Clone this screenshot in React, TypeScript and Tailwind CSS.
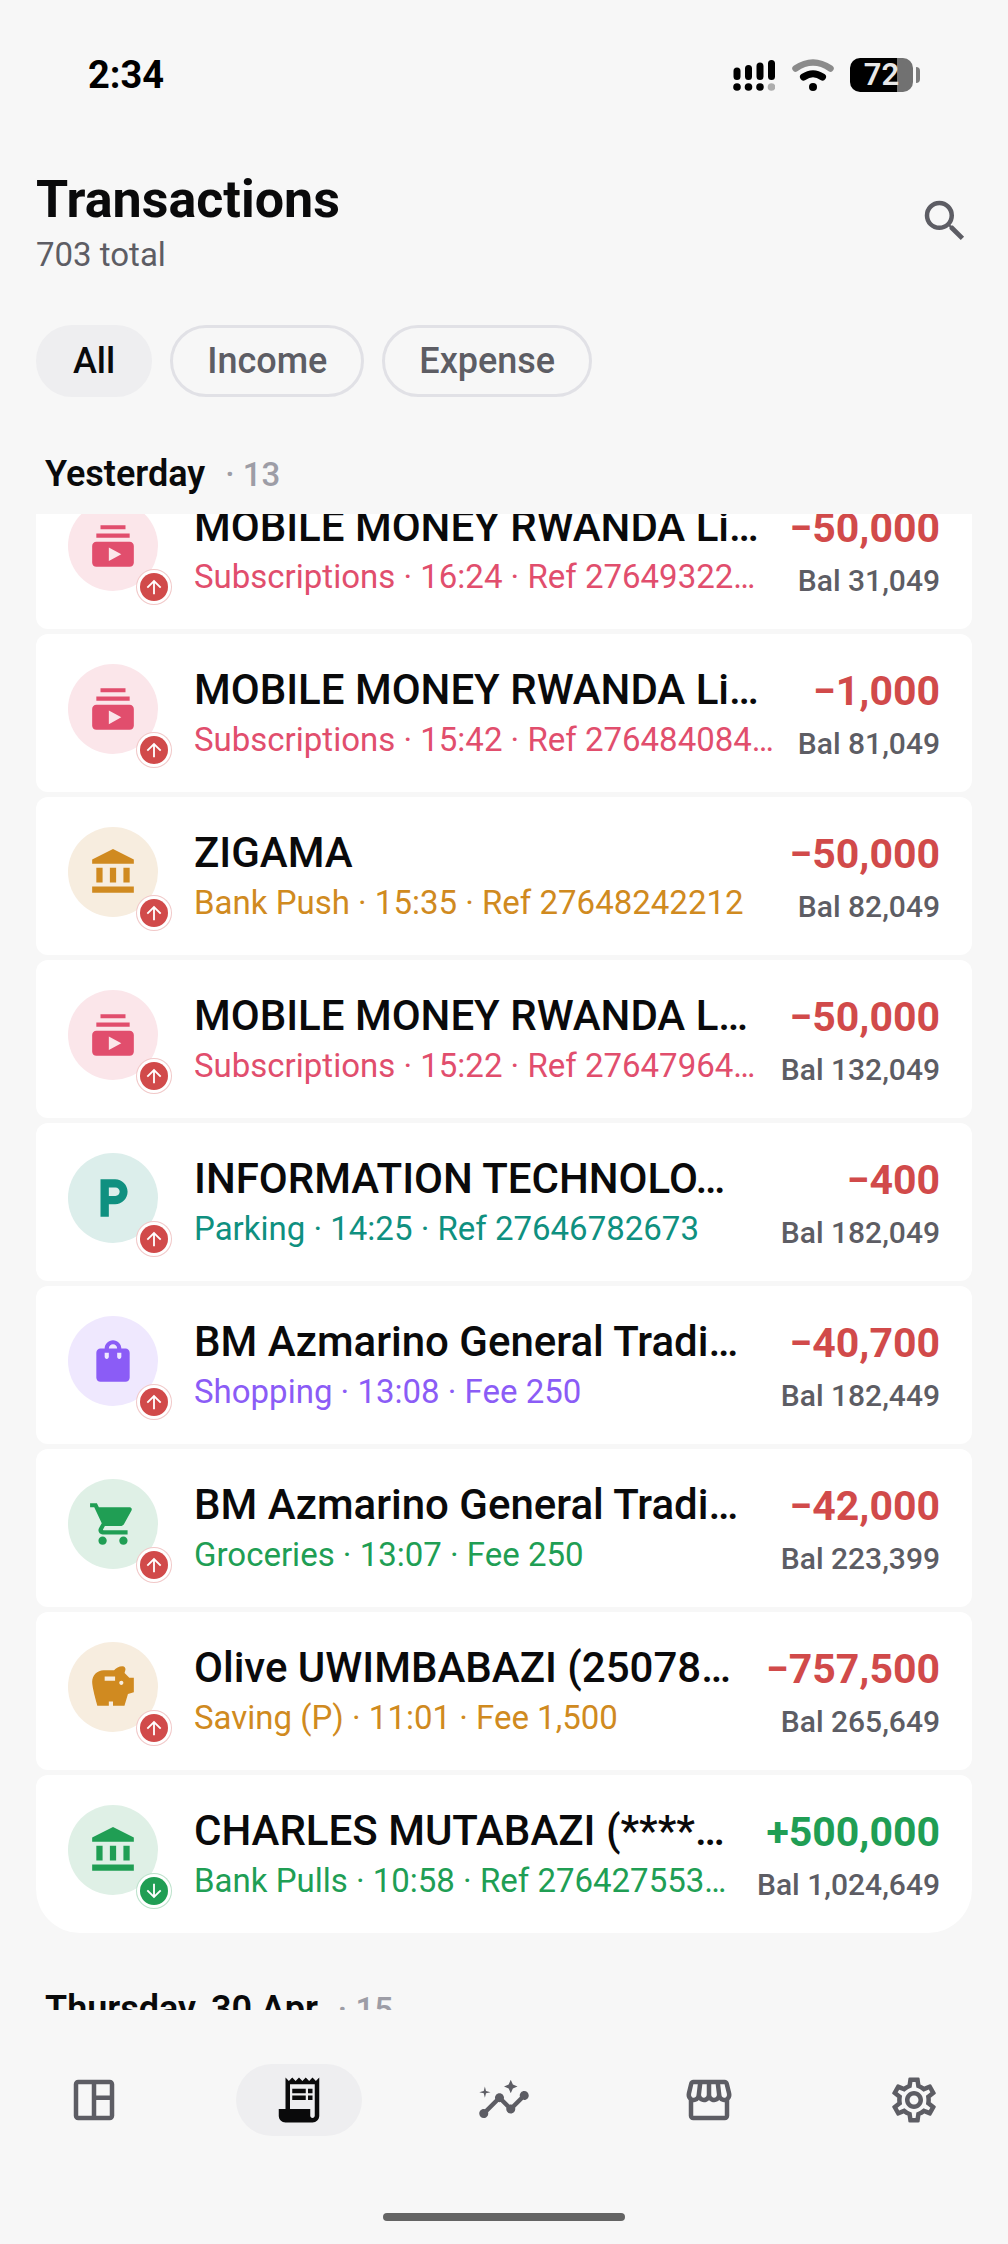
import React from 'react';
import clsx from 'clsx';
import {
  MdArrowDownward,
  MdArrowUpward,
  MdInsights,
  MdLocalParking,
  MdOutlineSettings,
  MdOutlineSpaceDashboard,
  MdOutlineStorefront,
  MdReceiptLong,
  MdSavings,
  MdSearch,
  MdShoppingBag,
  MdShoppingCart,
  MdSubscriptions,
} from 'react-icons/md';

type IconType = React.ComponentType<{ className?: string }>;

function BankIcon({ className }: { className?: string }) {
  return (
    <svg viewBox="0 0 24 24" fill="currentColor" className={className}>
      <path d="M4 10h3v7H4zM10.5 10h3v7h-3zM17 10h3v7h-3zM2 19h20v3H2zM12 1 2 6v2h20V6z" />
    </svg>
  );
}

const tones = {
  pink: { text: 'text-[#e14e6d]', circle: 'bg-[#fbe6ea]' },
  amber: { text: 'text-[#d08a20]', circle: 'bg-[#f7eddf]' },
  teal: { text: 'text-[#0f9080]', circle: 'bg-[#dceeeb]' },
  purple: { text: 'text-[#8b5cf6]', circle: 'bg-[#efe8fe]' },
  green: { text: 'text-[#209e54]', circle: 'bg-[#dff0e6]' },
};

interface Transaction {
  name: string;
  details: string;
  amount: string;
  balance: string;
  icon: IconType;
  tone: keyof typeof tones;
  income?: boolean;
}

const transactions: Transaction[] = [
  { name: 'MOBILE MONEY RWANDA Li…', details: 'Subscriptions · 16:24 · Ref 27649322…', amount: '−50,000', balance: 'Bal 31,049', icon: MdSubscriptions, tone: 'pink' },
  { name: 'MOBILE MONEY RWANDA Li…', details: 'Subscriptions · 15:42 · Ref 276484084…', amount: '−1,000', balance: 'Bal 81,049', icon: MdSubscriptions, tone: 'pink' },
  { name: 'ZIGAMA', details: 'Bank Push · 15:35 · Ref 27648242212', amount: '−50,000', balance: 'Bal 82,049', icon: BankIcon, tone: 'amber' },
  { name: 'MOBILE MONEY RWANDA L…', details: 'Subscriptions · 15:22 · Ref 27647964…', amount: '−50,000', balance: 'Bal 132,049', icon: MdSubscriptions, tone: 'pink' },
  { name: 'INFORMATION TECHNOLO…', details: 'Parking · 14:25 · Ref 27646782673', amount: '−400', balance: 'Bal 182,049', icon: MdLocalParking, tone: 'teal' },
  { name: 'BM Azmarino General Tradi…', details: 'Shopping · 13:08 · Fee 250', amount: '−40,700', balance: 'Bal 182,449', icon: MdShoppingBag, tone: 'purple' },
  { name: 'BM Azmarino General Tradi…', details: 'Groceries · 13:07 · Fee 250', amount: '−42,000', balance: 'Bal 223,399', icon: MdShoppingCart, tone: 'green' },
  { name: 'Olive UWIMBABAZI (25078…', details: 'Saving (P) · 11:01 · Fee 1,500', amount: '−757,500', balance: 'Bal 265,649', icon: MdSavings, tone: 'amber' },
  { name: 'CHARLES MUTABAZI (****…', details: 'Bank Pulls · 10:58 · Ref 276427553…', amount: '+500,000', balance: 'Bal 1,024,649', icon: BankIcon, tone: 'green', income: true },
];

const filters = ['All', 'Income', 'Expense'];

const tabs: { label: string; icon: IconType }[] = [
  { label: 'Dashboard', icon: MdOutlineSpaceDashboard },
  { label: 'Transactions', icon: MdReceiptLong },
  { label: 'Insights', icon: MdInsights },
  { label: 'Shops', icon: MdOutlineStorefront },
  { label: 'Settings', icon: MdOutlineSettings },
];

function StatusBar() {
  return (
    <div className="flex h-[150px] items-center justify-between px-[88px] text-black">
      <span className="text-[38px] font-bold leading-[48px]">2:34</span>
      <div className="flex items-center">
        <svg viewBox="0 0 42 34" className="h-[34px] w-[42px]" fill="none" stroke="currentColor" strokeWidth="7" strokeLinecap="round">
          <path d="M4 13v5.500M15.500 10.500v8M27 8v10.500M38.500 5.500v13" />
          <circle cx="4" cy="29" r="3.800" fill="currentColor" stroke="none" />
          <circle cx="15.500" cy="29" r="3.800" fill="currentColor" stroke="none" />
          <circle cx="27" cy="29" r="3.800" fill="currentColor" stroke="none" />
          <circle cx="38.500" cy="29" r="3.800" fill="#adadad" stroke="none" />
        </svg>
        <svg viewBox="0 0 42 34" className="ml-[17px] h-[34px] w-[42px]" fill="none" strokeWidth="6.500" strokeLinecap="round">
          <path d="M3.500 10.500Q21 -1.500 38.500 10.500" stroke="#8b8b8b" />
          <path d="M11.500 19Q21 12.500 30.500 19" stroke="#000" strokeWidth="7" />
          <circle cx="21" cy="29" r="4" fill="#000" />
        </svg>
        <div className="ml-4 flex items-center gap-[3px]">
          <div className="flex h-[34px] w-[63px] items-center justify-center rounded-[10px] bg-linear-to-r from-black from-75% to-[#717171] to-75%">
            <span className="text-[31px] font-semibold leading-[34px] text-[#e8e8e8]">72</span>
          </div>
          <div className="h-4 w-1 rounded-r-[4px] bg-[#7d7d7d]" />
        </div>
      </div>
    </div>
  );
}

function SectionHeader({ title, count }: { title: string; count: number }) {
  return (
    <h2 className="flex items-baseline gap-5 px-[45px] text-[36px] font-semibold leading-[54px] text-[#0a0a0b]">
      {title}
      <span className="text-[33px] font-medium leading-none text-[#9d9da6]">· {count}</span>
    </h2>
  );
}

function TransactionRow({ transaction }: { transaction: Transaction }) {
  const { name, details, amount, balance, icon: Icon, tone, income } = transaction;
  const Arrow = income ? MdArrowDownward : MdArrowUpward;

  return (
    <li className="flex items-center rounded-xl bg-white px-8 py-[29px] last:rounded-b-[44px]">
      <div className="relative mb-2 shrink-0">
        <div className={clsx('flex size-[90px] items-center justify-center rounded-full', tones[tone].circle, tones[tone].text)}>
          <Icon className="size-[50px]" />
        </div>
        <div
          className={clsx(
            'absolute -bottom-[14px] -right-[14px] rounded-full border bg-white p-[3px]',
            income ? 'border-[#209e54]/30' : 'border-[#d14a4a]/30'
          )}
        >
          <div className={clsx('flex size-7 items-center justify-center rounded-full text-white', income ? 'bg-[#209e54]' : 'bg-[#d14a4a]')}>
            <Arrow className="size-[22px]" />
          </div>
        </div>
      </div>
      <div className="ml-9 min-w-0 flex-1 whitespace-nowrap">
        <p className="text-[42px] font-medium leading-[54px] text-[#0a0a0b]">{name}</p>
        <p className={clsx('text-[33px] leading-[46px]', tones[tone].text)}>{details}</p>
      </div>
      <div className="shrink-0 text-right">
        <p className={clsx('text-[41px] font-bold leading-[54px]', income ? 'text-[#209e54]' : 'text-[#d14a4a]')}>{amount}</p>
        <p className="mt-2 text-[30px] font-medium leading-[36px] text-[#5d5d64]">{balance}</p>
      </div>
    </li>
  );
}

export default function App() {
  const [filter, setFilter] = React.useState('All');
  const [tab, setTab] = React.useState('Transactions');

  return (
    <div className="flex h-screen flex-col bg-[#f7f7f7] font-['Roboto',sans-serif]">
      <StatusBar />

      <header className="flex items-center justify-between px-9 pt-[18px]">
        <div>
          <h1 className="text-[52px] font-bold leading-[64px] text-[#0a0a0b]">Transactions</h1>
          <p className="text-[33px] leading-[45px] text-[#5d5d64]">703 total</p>
        </div>
        <button aria-label="Search" className="pb-1 text-[#5d5d64]">
          <MdSearch className="size-[54px]" />
        </button>
      </header>

      <div className="mt-12 flex gap-[18px] px-9">
        {filters.map((item) => (
          <button
            key={item}
            onClick={() => setFilter(item)}
            className={clsx(
              'h-[72px] rounded-full border-3 px-[34px] text-[36px] font-medium',
              item === filter ? 'border-[#eeeef0] bg-[#eeeef0] text-[#0a0a0b]' : 'border-[#e1e1e6] text-[#5d5d64]'
            )}
          >
            {item}
          </button>
        ))}
      </div>

      <div className="pb-[13px] pt-[50px]">
        <SectionHeader title="Yesterday" count={13} />
      </div>

      <main className="min-h-0 flex-1 overflow-hidden">
        {/* list is scrolled slightly under the sticky day header */}
        <ul className="-mt-[43px] flex flex-col gap-[5px] px-9">
          {transactions.map((transaction, i) => (
            <TransactionRow key={i} transaction={transaction} />
          ))}
        </ul>
        <div className="pt-[49px]">
          <SectionHeader title="Thursday, 30 Apr" count={15} />
        </div>
      </main>

      <nav className="flex shrink-0 flex-col items-center pb-[23px] pt-[54px]">
        <div className="flex w-full justify-between px-[31px]">
          {tabs.map(({ label, icon: Icon }) => (
            <button
              key={label}
              aria-label={label}
              onClick={() => setTab(label)}
              className={clsx(
                'flex h-[72px] w-[126px] items-center justify-center rounded-full',
                label === tab ? 'bg-[#eeeef0] text-[#0a0a0b]' : 'text-[#5d5d64]'
              )}
            >
              <Icon className="size-[54px]" />
            </button>
          ))}
        </div>
        <div className="mt-[77px] h-2 w-[242px] rounded-full bg-[#646464]" />
      </nav>
    </div>
  );
}
